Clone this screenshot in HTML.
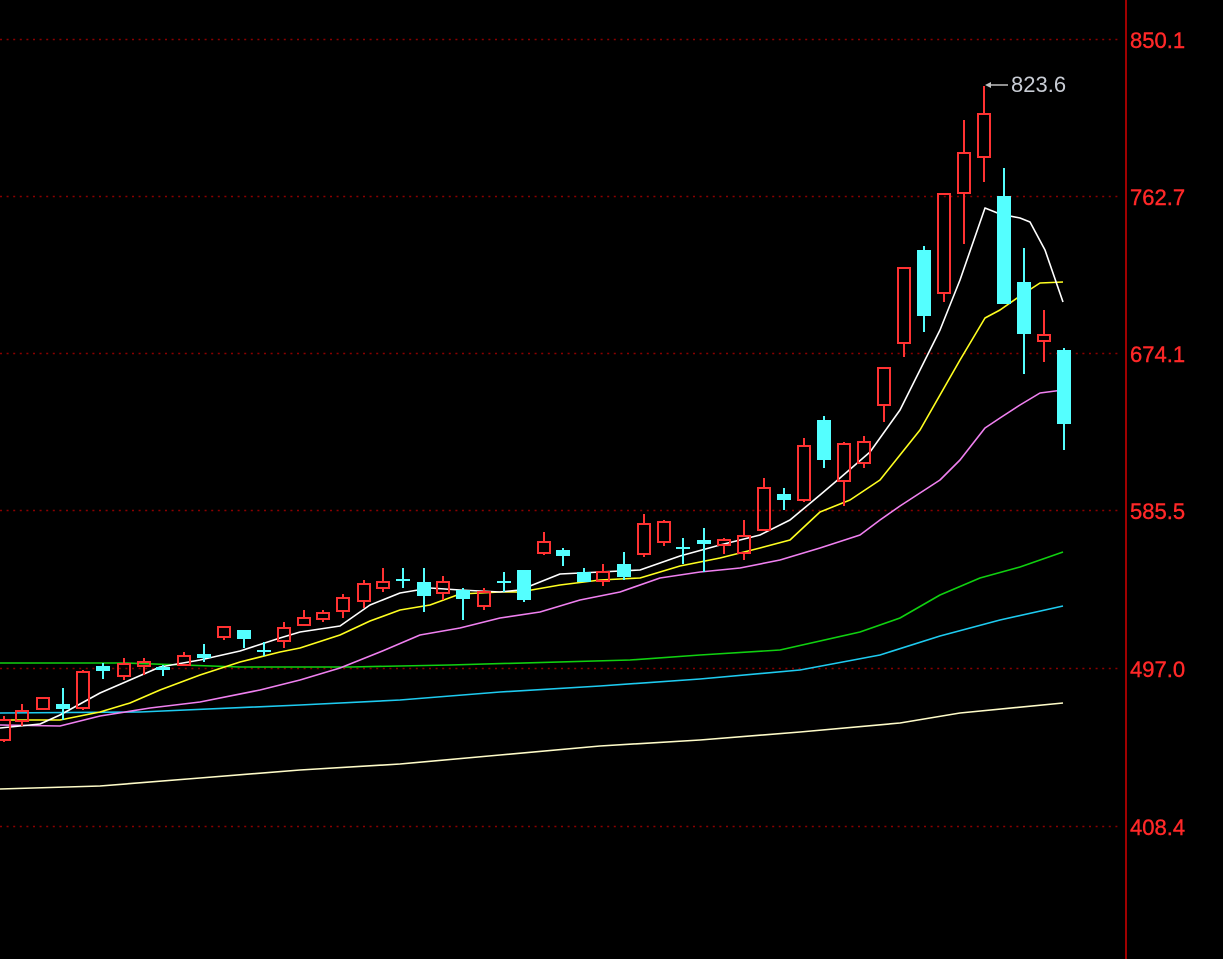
<!DOCTYPE html>
<html><head><meta charset="utf-8"><style>
html,body{margin:0;padding:0;background:#000;width:1223px;height:959px;overflow:hidden}
svg{display:block}
text{font-family:"Liberation Sans",sans-serif}
</style></head><body>
<svg width="1223" height="959" viewBox="0 0 1223 959" xmlns="http://www.w3.org/2000/svg">
<rect width="1223" height="959" fill="#000"/>
<g stroke="#8b0000" stroke-width="1.5" stroke-dasharray="2,4.6">
<line x1="0" y1="39.5" x2="1118" y2="39.5"/>
<line x1="0" y1="196.5" x2="1118" y2="196.5"/>
<line x1="0" y1="353.5" x2="1118" y2="353.5"/>
<line x1="0" y1="510.5" x2="1118" y2="510.5"/>
<line x1="0" y1="668.5" x2="1118" y2="668.5"/>
<line x1="0" y1="826.5" x2="1118" y2="826.5"/>
</g>
<line x1="1126" y1="0" x2="1126" y2="959" stroke="#a00000" stroke-width="2"/>
<g fill="#ff2828" font-size="22" stroke="#ff2828" stroke-width="0.4">
<text x="1130" y="48">850.1</text>
<text x="1130" y="205">762.7</text>
<text x="1130" y="362">674.1</text>
<text x="1130" y="519">585.5</text>
<text x="1130" y="677">497.0</text>
<text x="1130" y="835">408.4</text>
</g>
<g fill="none" stroke-width="1.6" stroke-linejoin="round">
<polyline stroke="#fffcc8" points="0,789 100,786 200,778 300,770 400,764 500,755 600,746 700,740 800,732 900,723 960,713 1063,703"/>
<polyline stroke="#1ecbf0" points="0,713 140,712 300,705 400,700 500,692 600,686 700,679 800,670 880,655 940,636 1000,620 1063,606"/>
<polyline stroke="#10d010" points="0,663 125,663 240,667 350,667 450,665 630,660 700,655 780,650 860,632 900,618 940,595 980,578 1020,567 1063,552"/>
<polyline stroke="#f080f0" points="0,725 60,726 100,716 150,708 200,702 260,690 300,680 340,668 380,652 420,635 460,628 500,618 540,612 580,600 620,592 660,578 700,572 740,568 780,560 820,548 860,535 880,520 900,506 940,480 960,460 985,428 1000,418 1020,405 1040,393 1063,390"/>
<polyline stroke="#ffff20" points="0,720 60,720 100,712 130,703 160,690 200,675 240,662 280,652 300,648 340,635 370,621 400,610 430,605 460,594 500,592 520,592 560,585 600,580 640,578 680,566 720,558 760,548 790,540 820,512 850,500 880,480 900,455 920,430 960,360 985,318 1000,310 1020,296 1040,283 1063,282"/>
<polyline stroke="#ffffff" points="0,728 40,724 60,715 100,693 130,680 160,667 200,660 240,651 280,638 300,632 340,626 370,605 400,593 430,588 460,590 500,592 520,590 560,574 600,572 640,570 680,556 720,545 760,535 790,520 820,495 840,478 870,452 900,410 920,370 940,330 960,280 985,208 1000,214 1020,218 1030,222 1045,250 1063,302"/>
</g>
<path stroke="#ff3232" stroke-width="2" fill="none" d="M4 716V720M4 740V742M22 704V711M22 721V726M43 697V698M43 709V710M83 670V672M83 708V710M124 658V664M124 676V680M144 658V662M144 666V675M184 652V656M184 665V666M224 626V627M224 637V640M284 622V628M284 641V648M304 610V618M304 625V626M323 610V613M323 619V622M343 594V598M343 611V618M364 580V584M364 601V608M383 568V582M383 588V592M443 576V582M443 593V600M484 588V592M484 606V610M544 532V542M544 553V555M603 564V572M603 581V586M644 514V524M644 554V557M664 520V522M664 542V546M724 538V540M724 545V554M744 520V536M744 553V560M764 478V488M764 530V531M804 438V446M804 500V502M844 442V444M844 481V506M864 436V442M864 463V468M884 405V422M904 343V357M944 293V302M964 120V153M964 193V244M984 86V114M984 157V182M1044 310V335M1044 341V362"/>
<g fill="none" stroke="#ff3232" stroke-width="2">
<rect x="-2" y="720" width="12" height="20"/><rect x="16" y="711" width="12" height="10"/><rect x="37" y="698" width="12" height="11"/><rect x="77" y="672" width="12" height="36"/><rect x="118" y="664" width="12" height="12"/><rect x="138" y="662" width="12" height="4"/><rect x="178" y="656" width="12" height="9"/><rect x="218" y="627" width="12" height="10"/><rect x="278" y="628" width="12" height="13"/><rect x="298" y="618" width="12" height="7"/><rect x="317" y="613" width="12" height="6"/><rect x="337" y="598" width="12" height="13"/><rect x="358" y="584" width="12" height="17"/><rect x="377" y="582" width="12" height="6"/><rect x="437" y="582" width="12" height="11"/><rect x="478" y="592" width="12" height="14"/><rect x="538" y="542" width="12" height="11"/><rect x="597" y="572" width="12" height="9"/><rect x="638" y="524" width="12" height="30"/><rect x="658" y="522" width="12" height="20"/><rect x="718" y="540" width="12" height="5"/><rect x="738" y="536" width="12" height="17"/><rect x="758" y="488" width="12" height="42"/><rect x="798" y="446" width="12" height="54"/><rect x="838" y="444" width="12" height="37"/><rect x="858" y="442" width="12" height="21"/><rect x="878" y="368" width="12" height="37"/><rect x="898" y="268" width="12" height="75"/><rect x="938" y="194" width="12" height="99"/><rect x="958" y="153" width="12" height="40"/><rect x="978" y="114" width="12" height="43"/><rect x="1038" y="335" width="12" height="6"/>
</g>
<path stroke="#54ffff" stroke-width="2" fill="none" d="M63 688V720M103 663V679M163 665V676M204 644V662M244 630V648M264 642V656M403 568V588M424 568V612M463 588V620M504 572V592M524 570V602M563 548V566M584 568V582M624 552V580M683 538V564M704 528V572M784 488V510M824 416V468M924 246V332M1004 168V304M1024 248V374M1064 348V450"/>
<g fill="#54ffff">
<rect x="56" y="704" width="14" height="5"/><rect x="96" y="666" width="14" height="5"/><rect x="156" y="667" width="14" height="3"/><rect x="197" y="654" width="14" height="4"/><rect x="237" y="630" width="14" height="9"/><rect x="257" y="650" width="14" height="2"/><rect x="396" y="579" width="14" height="2"/><rect x="417" y="582" width="14" height="14"/><rect x="456" y="590" width="14" height="9"/><rect x="497" y="581" width="14" height="2"/><rect x="517" y="570" width="14" height="30"/><rect x="556" y="550" width="14" height="6"/><rect x="577" y="572" width="14" height="10"/><rect x="617" y="564" width="14" height="13"/><rect x="676" y="547" width="14" height="2"/><rect x="697" y="540" width="14" height="4"/><rect x="777" y="494" width="14" height="6"/><rect x="817" y="420" width="14" height="40"/><rect x="917" y="250" width="14" height="66"/><rect x="997" y="196" width="14" height="108"/><rect x="1017" y="282" width="14" height="52"/><rect x="1057" y="350" width="14" height="74"/>
</g>
<text x="1011" y="92" fill="#c8ccd4" font-size="22">823.6</text>
<line x1="988" y1="85" x2="1008" y2="85" stroke="#c0c0c0" stroke-width="1.5"/>
<polygon points="985,85 991,82 991,88" fill="#c0c0c0"/>
</svg>
</body></html>
